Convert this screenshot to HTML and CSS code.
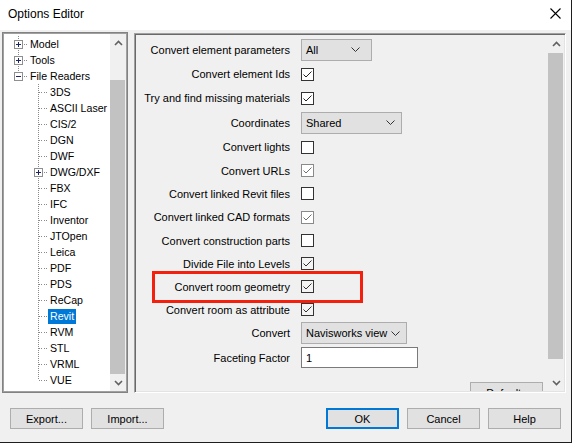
FILE: index.html
```html
<!DOCTYPE html>
<html>
<head>
<meta charset="utf-8">
<link rel="stylesheet" href="styles.css">
</head>
<body>
<div class="window">
  <header class="titlebar">
    <span class="title">Options Editor</span>
    <svg class="close" width="11" height="11" viewBox="0 0 11 11"><path d="M0.5 0.5 L10.5 10.5 M10.5 0.5 L0.5 10.5" stroke="#000" stroke-width="1.1" fill="none"/></svg>
  </header>

  <div class="content">
    <div class="tree-panel">
      <div class="tree">
        <div class="node root"><span class="conn"><svg class="exp" width="9" height="9" viewBox="0 0 9 9"><rect x="0.5" y="0.5" width="8" height="8" fill="#fff" stroke="#8e8f8f"/><path d="M2 4.5H7M4.5 2V7" stroke="#1c2466"/></svg></span><span class="hd"></span><span class="lbl">Model</span></div>
        <div class="node root"><span class="conn"><svg class="exp" width="9" height="9" viewBox="0 0 9 9"><rect x="0.5" y="0.5" width="8" height="8" fill="#fff" stroke="#8e8f8f"/><path d="M2 4.5H7M4.5 2V7" stroke="#1c2466"/></svg></span><span class="hd"></span><span class="lbl">Tools</span></div>
        <div class="node root last"><span class="conn"><svg class="exp" width="9" height="9" viewBox="0 0 9 9"><rect x="0.5" y="0.5" width="8" height="8" fill="#fff" stroke="#8e8f8f"/><path d="M2 4.5H7" stroke="#1c2466"/></svg></span><span class="hd"></span><span class="lbl">File Readers</span></div>
        <div class="node leaf"><span class="conn"></span><span class="hd"></span><span class="lbl">3DS</span></div>
        <div class="node leaf"><span class="conn"></span><span class="hd"></span><span class="lbl">ASCII Laser</span></div>
        <div class="node leaf"><span class="conn"></span><span class="hd"></span><span class="lbl">CIS/2</span></div>
        <div class="node leaf"><span class="conn"></span><span class="hd"></span><span class="lbl">DGN</span></div>
        <div class="node leaf"><span class="conn"></span><span class="hd"></span><span class="lbl">DWF</span></div>
        <div class="node leaf"><span class="conn boxed"><svg class="exp" width="9" height="9" viewBox="0 0 9 9"><rect x="0.5" y="0.5" width="8" height="8" fill="#fff" stroke="#8e8f8f"/><path d="M2 4.5H7M4.5 2V7" stroke="#1c2466"/></svg></span><span class="hd"></span><span class="lbl">DWG/DXF</span></div>
        <div class="node leaf"><span class="conn"></span><span class="hd"></span><span class="lbl">FBX</span></div>
        <div class="node leaf"><span class="conn"></span><span class="hd"></span><span class="lbl">IFC</span></div>
        <div class="node leaf"><span class="conn"></span><span class="hd"></span><span class="lbl">Inventor</span></div>
        <div class="node leaf"><span class="conn"></span><span class="hd"></span><span class="lbl">JTOpen</span></div>
        <div class="node leaf"><span class="conn"></span><span class="hd"></span><span class="lbl">Leica</span></div>
        <div class="node leaf"><span class="conn"></span><span class="hd"></span><span class="lbl">PDF</span></div>
        <div class="node leaf"><span class="conn"></span><span class="hd"></span><span class="lbl">PDS</span></div>
        <div class="node leaf"><span class="conn"></span><span class="hd"></span><span class="lbl">ReCap</span></div>
        <div class="node leaf"><span class="conn"></span><span class="hd"></span><span class="lbl sel">Revit</span></div>
        <div class="node leaf"><span class="conn"></span><span class="hd"></span><span class="lbl">RVM</span></div>
        <div class="node leaf"><span class="conn"></span><span class="hd"></span><span class="lbl">STL</span></div>
        <div class="node leaf"><span class="conn"></span><span class="hd"></span><span class="lbl">VRML</span></div>
        <div class="node leaf last"><span class="conn"></span><span class="hd"></span><span class="lbl">VUE</span></div>
      </div>
      <div class="vscroll tree-scroll">
        <div class="arrow"><svg width="9" height="6" viewBox="0 0 9 6"><path d="M1 5 L4.5 1.5 L8 5" stroke="#606060" stroke-width="1.6" fill="none"/></svg></div>
        <div class="track"><div class="thumb"></div></div>
        <div class="arrow"><svg width="9" height="6" viewBox="0 0 9 6"><path d="M1 1 L4.5 4.5 L8 1" stroke="#606060" stroke-width="1.6" fill="none"/></svg></div>
      </div>
    </div>

    <div class="options-panel">
      <div class="options-body">
        <div class="form">
          <span class="label">Convert element parameters</span>
          <div class="select w-all"><span>All</span><svg width="9" height="5" viewBox="0 0 9 5"><path d="M0.5 0.5 L4.5 4.5 L8.5 0.5" stroke="#333" fill="none"/></svg></div>

          <span class="label">Convert element Ids</span>
          <span class="cb"><svg width="11" height="11" viewBox="0 0 11 11"><path d="M1.5 5.5 L4 8 L9.5 2.5" stroke="#222" fill="none"/></svg></span>

          <span class="label">Try and find missing materials</span>
          <span class="cb"><svg width="11" height="11" viewBox="0 0 11 11"><path d="M1.5 5.5 L4 8 L9.5 2.5" stroke="#222" fill="none"/></svg></span>

          <span class="label">Coordinates</span>
          <div class="select w-coord"><span>Shared</span><svg width="9" height="5" viewBox="0 0 9 5"><path d="M0.5 0.5 L4.5 4.5 L8.5 0.5" stroke="#333" fill="none"/></svg></div>

          <span class="label">Convert lights</span>
          <span class="cb"></span>

          <span class="label">Convert URLs</span>
          <span class="cb dim"><svg width="11" height="11" viewBox="0 0 11 11"><path d="M1.5 5.5 L4 8 L9.5 2.5" stroke="#707070" fill="none"/></svg></span>

          <span class="label">Convert linked Revit files</span>
          <span class="cb"></span>

          <span class="label">Convert linked CAD formats</span>
          <span class="cb dim"><svg width="11" height="11" viewBox="0 0 11 11"><path d="M1.5 5.5 L4 8 L9.5 2.5" stroke="#707070" fill="none"/></svg></span>

          <span class="label">Convert construction parts</span>
          <span class="cb"></span>

          <span class="label">Divide File into Levels</span>
          <span class="cb flat"><svg width="11" height="11" viewBox="0 0 11 11"><path d="M1.5 5.5 L4 8 L9.5 2.5" stroke="#333" fill="none"/></svg></span>

          <span class="label marked">Convert room geometry</span>
          <span class="cb flat"><svg width="11" height="11" viewBox="0 0 11 11"><path d="M1.5 5.5 L4 8 L9.5 2.5" stroke="#333" fill="none"/></svg></span>

          <span class="label">Convert room as attribute</span>
          <span class="cb flat"><svg width="11" height="11" viewBox="0 0 11 11"><path d="M1.5 5.5 L4 8 L9.5 2.5" stroke="#333" fill="none"/></svg></span>

          <span class="label">Convert</span>
          <div class="select w-conv"><span>Navisworks view</span><svg width="9" height="5" viewBox="0 0 9 5"><path d="M0.5 0.5 L4.5 4.5 L8.5 0.5" stroke="#333" fill="none"/></svg></div>

          <span class="label">Faceting Factor</span>
          <div class="input">1</div>
        </div>
        <div class="defaults-row"><button class="btn">Defaults</button></div>
      </div>
      <div class="vscroll main-scroll">
        <div class="arrow"><svg width="9" height="6" viewBox="0 0 9 6"><path d="M1 5 L4.5 1.5 L8 5" stroke="#606060" stroke-width="1.6" fill="none"/></svg></div>
        <div class="track"><div class="thumb"></div></div>
        <div class="arrow"><svg width="9" height="6" viewBox="0 0 9 6"><path d="M1 1 L4.5 4.5 L8 1" stroke="#606060" stroke-width="1.6" fill="none"/></svg></div>
      </div>
    </div>
  </div>

  <footer class="footer">
    <button class="btn">Export...</button>
    <button class="btn">Import...</button>
    <button class="btn primary push">OK</button>
    <button class="btn">Cancel</button>
    <button class="btn">Help</button>
  </footer>
</div>
</body>
</html>
```

FILE: styles.css
```css
* { box-sizing: border-box; }

html, body {
  margin: 0;
  padding: 0;
  background: #f0f0f0;
}

body {
  font-family: "Liberation Sans", Arial, sans-serif;
  font-size: 11px;
  color: #000;
}

.window {
  width: 572px;
  height: 443px;
  border-right: 1px solid #1e1e1e;
  border-bottom: 1px solid #1e1e1e;
  background: #f0f0f0;
  display: flex;
  flex-direction: column;
  overflow: hidden;
}

/* title bar */
.titlebar {
  height: 30px;
  flex: none;
  background: #fff;
  display: flex;
  align-items: center;
  justify-content: space-between;
  padding: 0 10px 3px 8px;
}
.title {
  font-size: 12px;
}
.close {
  display: block;
}

/* main content */
.content {
  flex: none;
  height: 363px;
  display: flex;
  gap: 6px;
  padding: 2px 0 0 2px;
}

/* tree */
.tree-panel {
  width: 126px;
  height: 361px;
  border: 1px solid #828282;
  box-shadow: inset 0 0 0 1px #a0a0a0;
  padding: 1px;
  background: #fff;
  display: flex;
}
.tree {
  flex: 1;
  padding-top: 2px;
  background: #fff;
  font-size: 10.6px;
}
.node {
  height: 16px;
  display: flex;
  align-items: center;
}
.node.root { padding-left: 10px; }
.node.leaf { padding-left: 30px; }

.conn {
  width: 9px;
  height: 16px;
  flex: none;
  display: flex;
  align-items: center;
  justify-content: center;
  background-image: repeating-linear-gradient(to bottom, #8a8a8a 0 1px, transparent 1px 2px);
  background-size: 1px 100%;
  background-position: 4px 0;
  background-repeat: no-repeat;
}
.node.last .conn {
  background-size: 1px 8px;
}
.node.leaf .conn:not(.boxed) {
  background-image:
    repeating-linear-gradient(to bottom, #8a8a8a 0 1px, transparent 1px 2px),
    repeating-linear-gradient(to right, #8a8a8a 0 1px, transparent 1px 2px);
  background-size: 1px 100%, 4px 1px;
  background-position: 4px 0, 5px 8px;
  background-repeat: no-repeat, no-repeat;
}
.node.leaf.last .conn {
  background-size: 1px 8px, 4px 1px;
}
.exp { display: block; }
.hd {
  width: 5px;
  height: 1px;
  flex: none;
  align-self: center;
  background-image: repeating-linear-gradient(to right, transparent 0 1px, #8a8a8a 1px 2px);
}
.lbl {
  padding: 0 2px;
  line-height: 15px;
  white-space: nowrap;
}
.lbl.sel {
  background: #0078d7;
  color: #fff;
}

/* scrollbars */
.vscroll {
  width: 16px;
  flex: none;
  display: flex;
  flex-direction: column;
  background: #f0f0f0;
}
.arrow {
  height: 17px;
  flex: none;
  display: flex;
  align-items: center;
  justify-content: center;
}
.arrow svg { display: block; }
.track {
  flex: 1;
  display: flex;
  flex-direction: column;
}
.thumb {
  background: #c2c2c2;
  margin-right: 1px;
}
.tree-scroll .thumb {
  margin-top: 29px;
  flex: 1;
}
.main-scroll .thumb {
  margin-top: 1px;
  height: 306px;
}

/* options panel */
.options-panel {
  width: 432px;
  height: 360px;
  margin-top: 1px;
  border: 1px solid;
  border-color: #a0a0a0 #fff #fff #a0a0a0;
  box-shadow: inset 1px 1px 0 #696969, inset -1px -1px 0 #e3e3e3;
  padding: 1px;
  display: flex;
  background: #f0f0f0;
}
.options-body {
  flex: 1;
  overflow: hidden;
  display: flex;
  flex-direction: column;
}
.form {
  display: grid;
  grid-template-columns: 150px max-content;
  grid-template-rows: 25px 24px 24px 25px 24px 23px 23px 24px 23px 23px 23px 23px 24px 25px;
  column-gap: 11px;
  padding: 2px 0 0 4px;
  align-items: center;
}
.label {
  text-align: right;
  white-space: nowrap;
  grid-column: 1;
}
.label.marked {
  position: relative;
  align-self: stretch;
  display: flex;
  align-items: center;
  justify-content: flex-end;
}
.label.marked::after {
  content: "";
  position: absolute;
  left: 12px;
  top: -4px;
  width: 205px;
  height: 26px;
  border: 3px solid #f2200c;
  pointer-events: none;
}
.cb {
  grid-column: 2;
  width: 13px;
  height: 13px;
  border: 1px solid #333;
  background: #fff;
  display: flex;
  align-items: center;
  justify-content: center;
}
.cb svg { display: block; }
.cb.dim {
  border-color: #8a8a8a;
}
.cb.flat {
  background: #f4f4f4;
}
.select {
  grid-column: 2;
  height: 22px;
  border: 1px solid #adadad;
  background: #e1e1e1;
  display: flex;
  align-items: center;
  justify-content: space-between;
  padding: 0 6px 0 4px;
  white-space: nowrap;
}
.select svg { display: block; }
.w-all { width: 71px; padding-right: 11px; }
.w-coord { width: 101px; }
.w-conv { width: 106px; }
.input {
  grid-column: 2;
  width: 117px;
  height: 21px;
  border: 1px solid #7a7a7a;
  background: #fff;
  padding-left: 4px;
  display: flex;
  align-items: center;
}
.defaults-row {
  display: flex;
  justify-content: flex-end;
  padding-right: 5px;
  margin-top: 12px;
}

/* buttons */
.btn {
  font-family: "Liberation Sans", Arial, sans-serif;
  font-size: 11px;
  color: #000;
  width: 73px;
  height: 21px;
  padding: 0;
  margin: 0;
  border: 1px solid #adadad;
  background: #e1e1e1;
  flex: none;
}
.btn.primary {
  border: 2px solid #0078d7;
}
.footer {
  flex: 1;
  display: flex;
  align-items: flex-start;
  gap: 8px;
  padding: 15px 10px 0 10px;
}
.push { margin-left: auto; }
```
